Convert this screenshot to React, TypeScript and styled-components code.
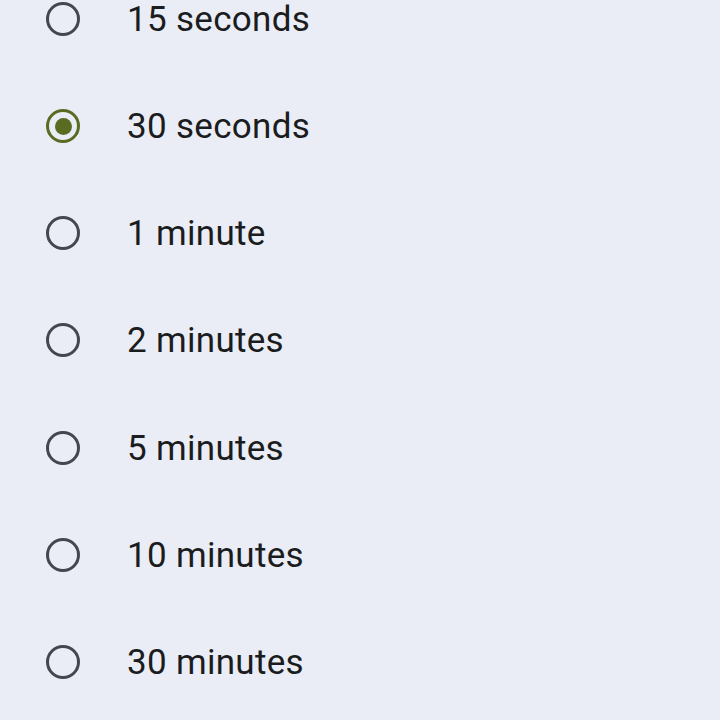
import React, { useState } from "react";
import styled, { createGlobalStyle } from "styled-components";

const Global = createGlobalStyle`
  html, body { margin: 0; padding: 0; background: #eaedf5; }
  body { font-family: Roboto, "Noto Sans", sans-serif; overflow: hidden; }
`;

const Page = styled.div`
  width: 720px;
  height: 720px;
  background: #eaedf5;
  overflow: hidden;
`;

const List = styled.div`
  display: flex;
  flex-direction: column;
  margin-top: -34.6px;
`;

const Row = styled.label`
  display: flex;
  align-items: center;
  height: 107.17px;
  padding-left: 46px;
  cursor: pointer;
`;

const Radio = styled.span<{ $checked: boolean }>`
  box-sizing: border-box;
  width: 34px;
  height: 34px;
  border-radius: 50%;
  border: 3.5px solid ${(p) => (p.$checked ? "#5a6b22" : "#44474e")};
  display: flex;
  align-items: center;
  justify-content: center;
  flex-shrink: 0;
  &::after {
    content: "";
    width: 17px;
    height: 17px;
    border-radius: 50%;
    background: #5a6b22;
    display: ${(p) => (p.$checked ? "block" : "none")};
  }
`;

const Label = styled.span`
  margin-left: 47px;
  padding-top: 2px;
  font-size: 35px;
  line-height: 40px;
  color: #1b1c20;
  letter-spacing: 0.3px;
`;

const options = [
  "15 seconds",
  "30 seconds",
  "1 minute",
  "2 minutes",
  "5 minutes",
  "10 minutes",
  "30 minutes",
];

export default function App() {
  const [sel, setSel] = useState(1);
  return (
    <Page>
      <Global />
      <List>
        {options.map((o, i) => (
          <Row key={o} onClick={() => setSel(i)}>
            <Radio $checked={sel === i} />
            <Label>{o}</Label>
          </Row>
        ))}
      </List>
    </Page>
  );
}
